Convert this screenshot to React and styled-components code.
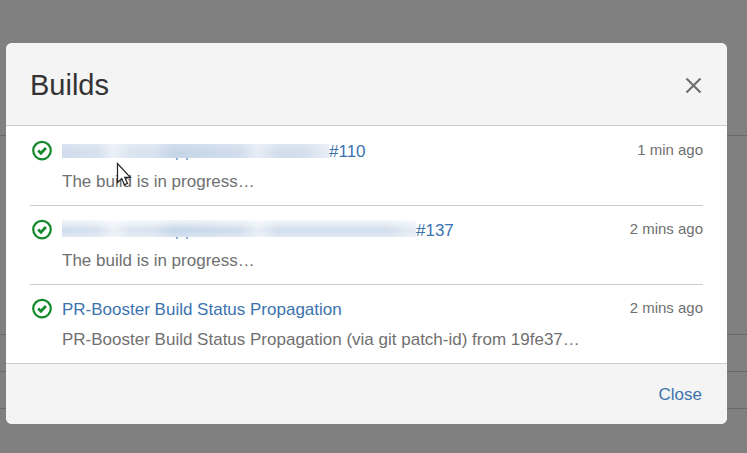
import React from "react"
import styled, { createGlobalStyle } from "styled-components"

const GlobalStyle = createGlobalStyle`
  * {
    box-sizing: border-box;
  }
  body {
    margin: 0;
    background-color: #808080;
    font-family: Arial, "Liberation Sans", sans-serif;
    font-size: 17px;
    line-height: 26px;
    color: #707070;
  }
`

const Backdrop = styled.div`
  position: fixed;
  inset: 0;
`

const BackdropRow = styled.div`
  height: ${({ $height }) => $height}px;
  border-bottom: 1px solid #696969;
`

const Page = styled.div`
  position: relative;
  padding: 43px 20px 29px 6px;
`

const Dialog = styled.section`
  position: relative;
  overflow: hidden;
  background-color: #fff;
  border-radius: 6px;
`

const Header = styled.header`
  display: flex;
  align-items: center;
  justify-content: space-between;
  padding: 24px 25px 22px 24px;
  background-color: #f4f4f4;
  border-bottom: 1px solid #ccc;
`

const Title = styled.h2`
  margin: 0;
  font-size: 29px;
  line-height: 36px;
  font-weight: normal;
  color: #333;
`

const IconButton = styled.button`
  display: flex;
  padding: 0;
  border: 0;
  background: none;
  color: #707070;
  cursor: pointer;
`

const BuildList = styled.ul`
  margin: 0;
  padding: 1px 24px 0;
  list-style: none;
`

const BuildItem = styled.li`
  display: grid;
  grid-template-columns: 24px 1fr auto;
  column-gap: 8px;
  row-gap: 4px;
  padding: 12px 0 10px;
  & + li {
    border-top: 1px solid #ccc;
  }
`

const StatusIcon = styled.svg`
  width: 24px;
  height: 24px;
`

const BuildLink = styled.a`
  justify-self: start;
  display: flex;
  color: #3b73af;
  text-decoration: none;
  white-space: nowrap;
`

// The two small ticks at the bottom are descenders left below the smear
const Redacted = styled.span`
  width: ${({ $width }) => $width}px;
  height: ${({ $height }) => $height + 2}px;
  margin-top: ${({ $height }) => 19 - $height}px;
  background-image: linear-gradient(#8fb0d6, #8fb0d6),
    linear-gradient(#8fb0d6, #8fb0d6),
    linear-gradient(
      rgba(255, 255, 255, ${({ $fade }) => $fade}),
      rgba(255, 255, 255, 0.1) 60%,
      rgba(255, 255, 255, ${({ $fade }) => $fade / 2})
    ),
    linear-gradient(
      90deg,
      #c9d8ea 0,
      #d2deed 36px,
      #e9eff6 52px,
      #d6e1ee 68px,
      #d3dfed 92px,
      #bed0e5 112px,
      #c3d3e7 140px,
      #cbd9ea 178px,
      #e4ebf4 196px,
      #ccdaea 216px,
      #cddaea calc(100% - 28px),
      #e4ebf4 100%
    );
  background-size: 2px 2px, 2px 2px, 100% calc(100% - 2px),
    100% calc(100% - 2px);
  background-position: 114px 100%, 124px 100%, 0 0, 0 0;
  background-repeat: no-repeat;
`

const Time = styled.time`
  font-size: 15px;
  line-height: 22px;
`

const Description = styled.p`
  grid-column: 2;
  margin: 0;
  overflow: hidden;
  text-overflow: ellipsis;
  white-space: nowrap;
`

const Footer = styled.footer`
  display: flex;
  justify-content: flex-end;
  padding: 18px 25px 16px;
  background-color: #f4f4f4;
  border-top: 1px solid #ccc;
`

const CloseButton = styled.button`
  padding: 0;
  border: 0;
  background: none;
  font: inherit;
  color: #3b73af;
  cursor: pointer;
`

const Cursor = styled.svg`
  position: absolute;
  left: 116px;
  top: 162px;
  width: 16px;
  height: 24px;
`

const builds = [
  {
    id: 1,
    redacted: { width: 267, height: 14, fade: 0.3 },
    name: "#110",
    time: "1 min ago",
    description: "The build is in progress…"
  },
  {
    id: 2,
    redacted: { width: 354, height: 17, fade: 0.8 },
    name: "#137",
    time: "2 mins ago",
    description: "The build is in progress…"
  },
  {
    id: 3,
    name: "PR-Booster Build Status Propagation",
    time: "2 mins ago",
    description:
      "PR-Booster Build Status Propagation (via git patch-id) from 19fe37…"
  }
]

const rows = [136, 199, 37, 37]

const SuccessIcon = () => (
  <StatusIcon
    viewBox="0 0 24 24"
    fill="none"
    stroke="#14892c"
    role="img"
    aria-label="Successful"
  >
    <circle cx="12" cy="11.6" r="8.8" strokeWidth="2.2" />
    <path d="M8.2 11.6l2.7 2.6 5-5.2" strokeWidth="2.8" />
  </StatusIcon>
)

const Build = ({ build: { redacted, name, time, description } }) => (
  <BuildItem>
    <SuccessIcon />
    <BuildLink href="#build">
      {redacted && (
        <Redacted
          $width={redacted.width}
          $height={redacted.height}
          $fade={redacted.fade}
        />
      )}
      {name}
    </BuildLink>
    <Time>{time}</Time>
    <Description>{description}</Description>
  </BuildItem>
)

const App = () => (
  <>
    <GlobalStyle />
    <Backdrop>
      {rows.map((height, i) => (
        <BackdropRow key={i} $height={height} />
      ))}
    </Backdrop>
    <Page>
      <Dialog role="dialog" aria-labelledby="dialog-title">
        <Header>
          <Title id="dialog-title">Builds</Title>
          <IconButton aria-label="Dismiss">
            <svg
              width="17"
              height="17"
              viewBox="0 0 17 17"
              stroke="currentColor"
              strokeWidth="2.2"
            >
              <path d="M1.5 1.5l14 14M15.5 1.5l-14 14" />
            </svg>
          </IconButton>
        </Header>
        <BuildList>
          {builds.map(build => (
            <Build key={build.id} build={build} />
          ))}
        </BuildList>
        <Footer>
          <CloseButton>Close</CloseButton>
        </Footer>
      </Dialog>
      <Cursor viewBox="0 0 16 24" aria-hidden="true">
        <path
          d="M1.5 1.5v19l4.2-4 2.8 6.2 3-1.3-2.8-6.1h5.6z"
          fill="#fff"
          stroke="#222"
          strokeWidth="1.2"
        />
      </Cursor>
    </Page>
  </>
)

export default App
